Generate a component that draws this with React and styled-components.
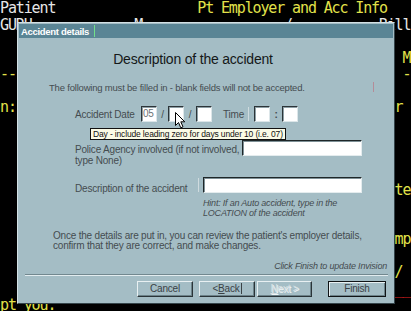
import React from "react";
import styled, { createGlobalStyle } from "styled-components";

const GlobalStyle = createGlobalStyle`
  html, body {
    margin: 0;
    padding: 0;
    background: #000;
  }
  body {
    width: 411px;
    height: 311px;
    overflow: hidden;
  }
`;

const YEL = "#e2e24a";
const WHT = "#e6e6e6";
const RED = "#e02020";

// terminal rows behind the dialog: [column, text, colour]
const rows = [
  [[0, "Patient", WHT], [25, "Pt Employer and Acc Info", YEL]],
  [[0, "GURU", WHT], [17, "M", WHT], [36, "/", WHT], [48, "Bill", WHT]],
  [],
  [[51, "M", YEL]],
  [[0, "----", YEL], [51, "--", YEL]],
  [],
  [[0, "n:", YEL], [50, "r", YEL]],
  [],
  [],
  [],
  [],
  [[50, "te", YEL]],
  [],
  [],
  [[50, "mp", YEL]],
  [],
  [[50, "/", YEL]],
  [[50, "__", RED]],
  [[0, "pt you:", YEL]],
];

const Cursor = () => (
  <Pointer width="11" height="17" viewBox="0 0 11 17">
    <path
      d="M0.5 0.5 L0.5 13.5 L3.5 10.5 L5.8 15.8 L8 14.8 L5.8 9.8 L9.8 9.8 Z"
      fill="#fff"
      stroke="#000"
      strokeWidth="1"
    />
  </Pointer>
);

const App = () => {
  return (
    <>
      <GlobalStyle />
      <Screen>
        <Terminal>
          {rows.map((segs, i) => (
            <Line key={i}>
              {segs.map(([col, text, color], j) => (
                <Seg key={j} $col={col} $len={text.length} $color={color}>
                  {text}
                </Seg>
              ))}
            </Line>
          ))}
        </Terminal>

        <Dialog>
          <TitleBar>
            Accident details
            <TitleCaret />
          </TitleBar>
          <Body>
            <Heading>Description of the accident</Heading>

            <NoticeRow>
              <span>
                The following must be filled in - blank fields will not be
                accepted.
              </span>
              <Mark />
            </NoticeRow>

            <DateRow>
              <Label $w={66}>Accident Date</Label>
              <Box>05</Box>
              <Sep $w={11}>/</Sep>
              <Box />
              <Sep $w={12}>/</Sep>
              <Box />
              <Label $w={25} $ml={11}>
                Time
              </Label>
              <VBar />
              <Box $ml={5} />
              <Sep $w={12} $bold>
                :
              </Sep>
              <Box />
              <Tip>Day - include leading zero for days under 10 (i.e. 07)</Tip>
              <Cursor />
            </DateRow>

            <PoliceRow>
              <Label $w={167} $mt={3.5}>
                Police Agency involved (if not involved,
                <br />
                type None)
              </Label>
              <Input $w={120} />
            </PoliceRow>

            <DescRow>
              <Label $w={123} $mt={5.5}>
                Description of the accident
              </Label>
              <VBar $mt={1} />
              <Input $w={159} $ml={4} />
            </DescRow>

            <Hint>
              Hint: If an Auto accident, type in the
              <br />
              LOCATION of the accident
            </Hint>

            <Para>
              Once the details are put in, you can review the patient's
              employer details,
              <br />
              confirm that they are correct, and make changes.
            </Para>

            <FinishNote>Click Finish to update Invision</FinishNote>

            <Separator />

            <ButtonRow>
              <Button $w={56}>Cancel</Button>
              <Button $w={56} $ml={6}>
                &lt; <u>B</u>ack
                <TextCaret />
              </Button>
              <Button $w={55} $ml={2} $disabled>
                <u>N</u>ext &gt;
              </Button>
              <Button $w={58} $ml={16} $default>
                Finish
              </Button>
            </ButtonRow>
          </Body>
        </Dialog>
      </Screen>
    </>
  );
};

export default App;

const Screen = styled.div`
  position: relative;
  width: 411px;
  height: 311px;
  background: #000;
  overflow: hidden;
`;

const Terminal = styled.div`
  font-family: "DejaVu Sans Mono", "Liberation Mono", monospace;
  font-size: 15px;
  letter-spacing: -1.13px;
  line-height: 16.5px;
`;

const Line = styled.div`
  height: 16.5px;
  display: grid;
  grid-template-columns: repeat(54, 7.9px);
`;

const Seg = styled.span`
  grid-column: ${(p) => p.$col + 1} / span ${(p) => p.$len};
  color: ${(p) => p.$color};
  white-space: pre;
`;

const Dialog = styled.div`
  position: absolute;
  left: 17px;
  top: 22px;
  width: 378px;
  height: 282px;
  box-sizing: border-box;
  background: #a4bdc5;
  border: 1px solid;
  border-color: #d2e0e4 #34444a #34444a #d2e0e4;
  padding: 1px;
  display: flex;
  flex-direction: column;
  font-family: "Liberation Sans", Arial, sans-serif;
  color: #444c50;
`;

const TitleBar = styled.div`
  height: 14px;
  background: #5a8595;
  color: #fff;
  font-weight: bold;
  font-size: 9.5px;
  letter-spacing: -0.3px;
  padding-left: 2px;
  display: flex;
  align-items: center;
`;

const TitleCaret = styled.span`
  width: 1px;
  height: 12px;
  margin-left: 5px;
  background: #72e08a;
`;

const Body = styled.div`
  flex: 1;
  display: flex;
  flex-direction: column;
  font-size: 10px;
  letter-spacing: -0.2px;
`;

const Heading = styled.div`
  margin-top: 13px;
  padding-right: 26px;
  height: 16px;
  line-height: 16px;
  text-align: center;
  font-size: 14px;
  color: #141818;
`;

const NoticeRow = styled.div`
  margin: 14.5px 19px 0 30px;
  height: 11px;
  line-height: 11px;
  font-size: 9.5px;
  display: flex;
  align-items: center;
  justify-content: space-between;
  white-space: nowrap;
`;

const Mark = styled.span`
  width: 1px;
  height: 10px;
  background: #b48c98;
`;

const DateRow = styled.div`
  position: relative;
  margin: 13.5px 0 0 56px;
  height: 16px;
  display: flex;
  align-items: center;
`;

const Label = styled.div`
  width: ${(p) => p.$w}px;
  margin-left: ${(p) => p.$ml || 0}px;
  margin-top: ${(p) => p.$mt || 0}px;
  line-height: 11px;
  white-space: nowrap;
  flex-shrink: 0;
`;

const Box = styled.div`
  width: 16px;
  height: 16px;
  margin-left: ${(p) => p.$ml || 0}px;
  box-sizing: border-box;
  background: #fff;
  border: 1px solid;
  border-color: #2c3438 #dce6e9 #dce6e9 #2c3438;
  box-shadow: inset 1px 1px #8e9fa5;
  color: #6a7276;
  font-size: 10px;
  line-height: 13px;
  padding-left: 1px;
  flex-shrink: 0;
`;

const Sep = styled.div`
  width: ${(p) => p.$w}px;
  text-align: center;
  font-weight: ${(p) => (p.$bold ? "bold" : "normal")};
  flex-shrink: 0;
`;

const VBar = styled.span`
  width: 1px;
  height: 14px;
  margin-top: ${(p) => p.$mt || 0}px;
  background: #cfdbdf;
  flex-shrink: 0;
`;

const Tip = styled.div`
  position: absolute;
  left: 15px;
  top: 22px;
  height: 12px;
  box-sizing: border-box;
  padding: 0 2px;
  background: #fbfbe6;
  border: 1px solid #111;
  color: #111;
  font-size: 8.5px;
  letter-spacing: -0.15px;
  line-height: 10px;
  white-space: nowrap;
`;

const Pointer = styled.svg`
  position: absolute;
  left: 100px;
  top: 6px;
`;

const PoliceRow = styled.div`
  margin: 18px 0 0 56px;
  display: flex;
  align-items: flex-start;
`;

const DescRow = styled.div`
  margin: 11.5px 0 0 56px;
  display: flex;
  align-items: flex-start;
`;

const Input = styled.div`
  width: ${(p) => p.$w}px;
  height: 16px;
  margin-left: ${(p) => p.$ml || 0}px;
  box-sizing: border-box;
  background: #fff;
  border: 1px solid;
  border-color: #1e2628 #e4ecee #e4ecee #1e2628;
  box-shadow: inset 1px 1px #7e9096;
  flex-shrink: 0;
`;

const Hint = styled.div`
  margin: 4px 0 0 184px;
  font-size: 9px;
  font-style: italic;
  line-height: 10px;
  white-space: nowrap;
`;

const Para = styled.div`
  margin: 13px 0 0 34px;
  line-height: 10px;
  white-space: nowrap;
`;

const FinishNote = styled.div`
  margin-top: 10px;
  padding-right: 6px;
  text-align: right;
  font-size: 9px;
  font-style: italic;
  line-height: 10px;
`;

const Separator = styled.div`
  margin: 3px 5px 0 6px;
  border-top: 1px solid #72888f;
  border-bottom: 1px solid #e2ecef;
`;

const ButtonRow = styled.div`
  margin: 5px 0 0 118px;
  display: flex;
`;

const Button = styled.div`
  width: ${(p) => p.$w}px;
  height: 16px;
  margin-left: ${(p) => p.$ml || 0}px;
  box-sizing: border-box;
  display: flex;
  align-items: center;
  justify-content: center;
  background: #a4bdc5;
  border: 1px solid;
  border-color: ${(p) =>
    p.$default ? "#101416" : "#e8f0f2 #2a3438 #2a3438 #e8f0f2"};
  box-shadow: ${(p) =>
    p.$default
      ? "inset 1px 1px #e8f0f2, inset -1px -1px #6c8289"
      : "inset -1px -1px #6c8289"};
  color: ${(p) => (p.$disabled ? "#d6e0e3" : "#3a4246")};
  text-shadow: ${(p) => (p.$disabled ? "1px 1px 0 #f0f5f6" : "none")};
  font-size: 10px;
  white-space: nowrap;
  u {
    text-decoration: underline;
  }
`;

const TextCaret = styled.span`
  width: 1px;
  height: 11px;
  margin-left: 1px;
  background: #3a4246;
`;
